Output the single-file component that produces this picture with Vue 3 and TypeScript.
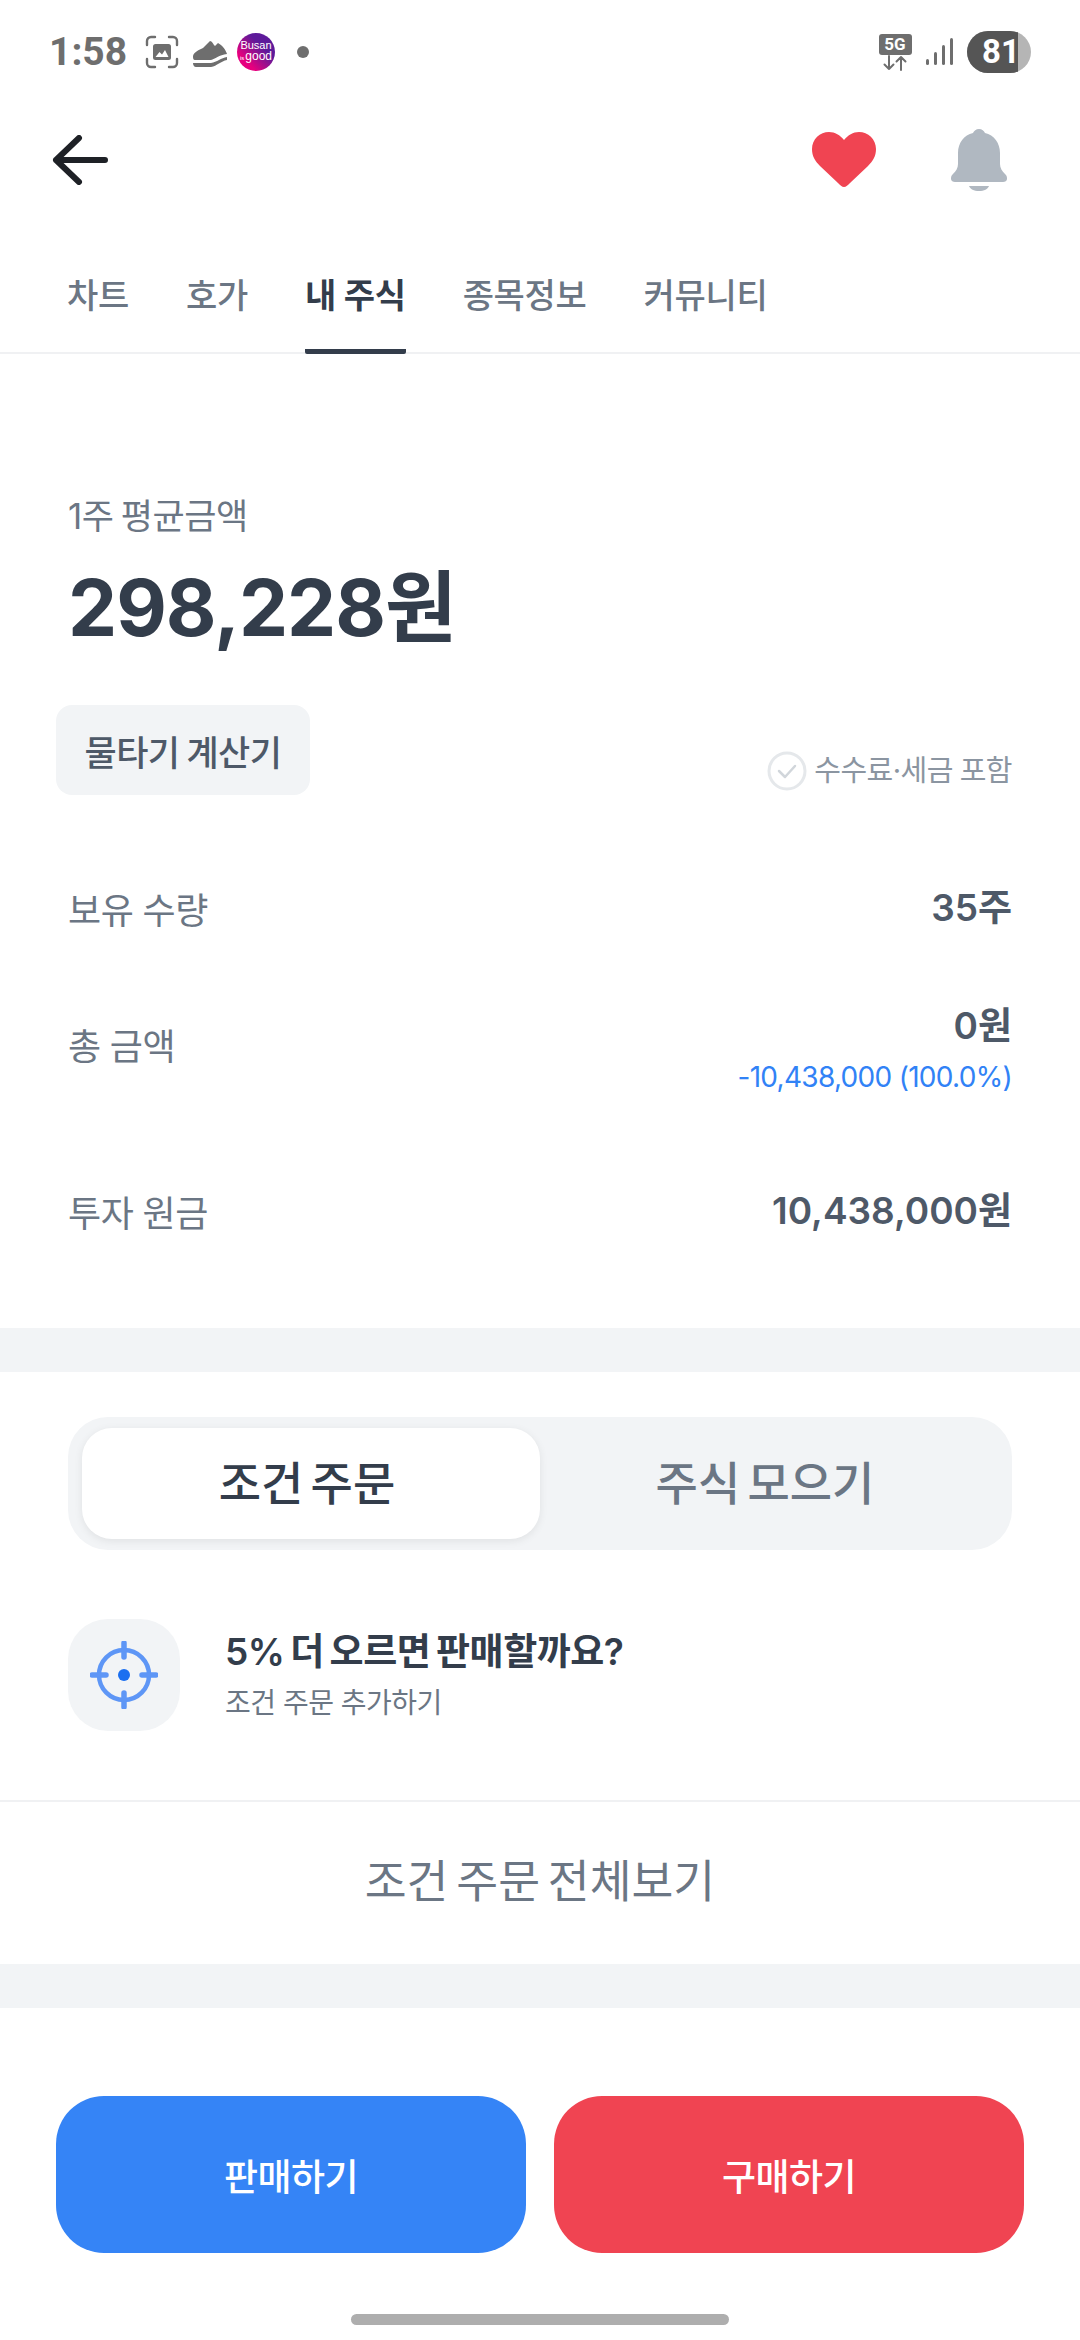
<template>
  <div class="screen">
    <div class="status-bar">
      <span class="time">1:58</span>
      <svg class="st-shot" viewBox="0 0 34 34" width="34" height="34">
        <path d="M2 10V6a4 4 0 0 1 4-4h4M24 2h4a4 4 0 0 1 4 4v4M32 24v4a4 4 0 0 1-4 4h-4M10 32H6a4 4 0 0 1-4-4v-4" fill="none" stroke="#6e6e6e" stroke-width="2.400" stroke-linecap="round" />
        <rect x="8" y="9" width="18" height="16" rx="2.500" fill="#6e6e6e" />
        <path d="M10.500 22l4-5 2.500 2.500 3-4.500 3.500 7z" fill="#fff" />
      </svg>
      <svg class="st-shoe" viewBox="0 0 36 32" width="36" height="32">
        <path d="M1 20c1-4 6-6 10-8l7-7c2 0 3 3 5 5l3-3c4 2 8 7 9 11-8 1-12 5-16 6H3c-2 0-2-2-2-4z" fill="#6e6e6e" />
        <path d="M1 27h18c6-1 10-5 16-6v3c-6 1-10 6-16 7H4c-2 0-3-2-3-4z" fill="#6e6e6e" />
      </svg>
      <div class="st-logo">
        <span class="logo-l1">Busan</span>
        <span class="logo-l2"><i>is</i>good</span>
      </div>
      <span class="st-dot"></span>
      <div class="st-right">
        <div class="st-5g">
          <span class="g-box">5G</span>
          <svg viewBox="0 0 26 16" width="26" height="16">
            <path d="M7 1v13M2.500 9.500L7 14l4.500-4.500M19 15V2M14.500 6.500L19 2l4.500 4.500" fill="none" stroke="#6e6e6e" stroke-width="2" stroke-linecap="round" stroke-linejoin="round" />
          </svg>
        </div>
        <svg class="st-signal" viewBox="0 0 28 30" width="28" height="30">
          <rect x="1" y="22" width="3" height="6" rx="1.500" fill="#6e6e6e" />
          <rect x="9" y="15" width="3" height="13" rx="1.500" fill="#6e6e6e" />
          <rect x="17" y="8" width="3" height="20" rx="1.500" fill="#6e6e6e" />
          <rect x="25" y="1" width="3" height="27" rx="1.500" fill="#6e6e6e" />
        </svg>
        <div class="st-batt"><span class="batt-fill"></span><span class="batt-num">81</span></div>
      </div>
    </div>

    <header class="top-bar">
      <svg class="back" viewBox="0 0 56 50" width="56" height="50">
        <path d="M27 3L4 25l23 22M4 25h49" fill="none" stroke="#1e2126" stroke-width="6" stroke-linecap="round" stroke-linejoin="round" />
      </svg>
      <div class="top-actions">
        <svg viewBox="0 0 64 56" width="64" height="56">
          <path d="M32 55C30 55 28 53 26 51L8 34C3 29 0 24 0 17 0 7 8 0 17 0c6 0 11 3 15 8 4-5 9-8 15-8 9 0 17 7 17 17 0 7-3 12-8 17L38 51c-2 2-4 4-6 4z" fill="#f04452" />
        </svg>
        <svg viewBox="0 0 56 62" width="56" height="62">
          <path d="M28 0c3 0 5 2 6 4 9 2 15 10 15 20v11c0 4 2 7 5 10 2 2 2 3 2 5 0 2-2 3-4 3H4c-2 0-4-1-4-3 0-2 0-3 2-5 3-3 5-6 5-10V24C7 14 13 6 22 4c1-2 3-4 6-4z" fill="#b0b8c1" />
          <path d="M18 57h20c-1 3-5 5-10 5s-9-2-10-5z" fill="#b0b8c1" />
        </svg>
      </div>
    </header>

    <nav class="tabs">
      <div v-for="t in tabs" :key="t" class="tab" :class="{ active: t === '내 주식' }">{{ t }}</div>
    </nav>

    <section class="summary">
      <div class="avg-label">1주 평균금액</div>
      <div class="avg-value">298,228원</div>
      <div class="calc-row">
        <button class="calc-btn">물타기 계산기</button>
        <div class="fee-note">
          <svg viewBox="0 0 40 40" width="40" height="40">
            <circle cx="20" cy="20" r="18" fill="none" stroke="#e5e8eb" stroke-width="3" />
            <path d="M12 20l6 6 10-11" fill="none" stroke="#d1d6db" stroke-width="2.500" stroke-linecap="round" stroke-linejoin="round" />
          </svg>
          <span>수수료·세금 포함</span>
        </div>
      </div>
      <div class="info-row row-qty">
        <span class="info-label">보유 수량</span>
        <span class="info-value">35주</span>
      </div>
      <div class="info-row row-total">
        <span class="info-label">총 금액</span>
        <div class="info-right">
          <span class="info-value">0원</span>
          <span class="info-sub">-10,438,000 (100.0%)</span>
        </div>
      </div>
      <div class="info-row row-principal">
        <span class="info-label">투자 원금</span>
        <span class="info-value">10,438,000원</span>
      </div>
    </section>

    <div class="band"></div>

    <section class="orders">
      <div class="segment">
        <div class="seg-item on">조건 주문</div>
        <div class="seg-item">주식 모으기</div>
      </div>
      <div class="order-item">
        <div class="order-icon">
          <svg viewBox="0 0 68 68" width="68" height="68">
            <circle cx="34" cy="34" r="25" fill="none" stroke="#5e96f6" stroke-width="4.500" />
            <path d="M34 2v14M34 52v14M2 34h14M52 34h14" stroke="#5e96f6" stroke-width="5.500" stroke-linecap="round" />
            <circle cx="34" cy="34" r="6" fill="#1b6ff0" />
          </svg>
        </div>
        <div class="order-text">
          <div class="order-title">5% 더 오르면 판매할까요?</div>
          <div class="order-sub">조건 주문 추가하기</div>
        </div>
      </div>
      <div class="view-all">조건 주문 전체보기</div>
    </section>

    <div class="band"></div>

    <div class="actions">
      <button class="act sell">판매하기</button>
      <button class="act buy">구매하기</button>
    </div>
    <div class="home-pill"></div>
  </div>
</template>

<script setup lang="ts">
const tabs: string[] = ['차트', '호가', '내 주식', '종목정보', '커뮤니티']
</script>

<style>
html,
body {
  margin: 0;
  background: #fff;
}
</style>

<style scoped>
.screen {
  width: 1080px;
  height: 2340px;
  overflow: hidden;
  background: #fff;
  font-family: Inter, "Noto Sans CJK KR", sans-serif;
  color: #333d4b;
}

.status-bar {
  height: 76px;
  padding: 28px 50px 0 49px;
  box-sizing: border-box;
  display: flex;
  align-items: center;
  color: #6e6e6e;
}

.time {
  font-size: 39px;
  font-weight: 700;
  font-family: Roboto, sans-serif;
  width: 96px;
}

.st-shoe {
  margin-left: 13px;
}

.st-logo {
  width: 38px;
  height: 38px;
  margin-left: 9px;
  border-radius: 50%;
  background: linear-gradient(225deg, #5d1a9a 35%, #e6007e 75%);
  color: #fff;
  font-size: 11px;
  line-height: 11px;
  font-family: "Liberation Sans", sans-serif;
  display: flex;
  flex-direction: column;
  align-items: center;
  justify-content: center;
  overflow: hidden;
}

.logo-l1,
.logo-l2 {
  white-space: nowrap;
}

.logo-l2 {
  font-size: 12px;
}

.logo-l2 i {
  font-style: normal;
  font-size: 6px;
  margin-right: 1px;
}

.st-dot {
  width: 12px;
  height: 12px;
  border-radius: 50%;
  background: #6e6e6e;
  margin-left: 22px;
}

.st-right {
  margin-left: auto;
  margin-right: -1px;
  display: flex;
  align-items: center;
}

.st-5g {
  display: flex;
  flex-direction: column;
  align-items: center;
  width: 34px;
}

.g-box {
  width: 33px;
  height: 21px;
  line-height: 21px;
  background: #6e6e6e;
  color: #fff;
  font-size: 17px;
  font-weight: 700;
  border-radius: 3px;
  text-align: center;
  font-family: Roboto, sans-serif;
}

.st-signal {
  margin-left: 13px;
}

.st-batt {
  position: relative;
  margin-left: 14px;
  width: 64px;
  height: 42px;
  border-radius: 21px;
  background: #b5b5b5;
  overflow: hidden;
}

.batt-fill {
  position: absolute;
  left: 0;
  top: 0;
  bottom: 0;
  width: 51px;
  background: #555;
}

.batt-num {
  position: absolute;
  left: 15px;
  top: 0;
  line-height: 42px;
  color: #fff;
  font-size: 33px;
  font-weight: 700;
  font-family: Roboto, sans-serif;
}

.top-bar {
  height: 112px;
  margin-top: 28px;
  padding: 0 73px 0 52px;
  display: flex;
  align-items: center;
  justify-content: space-between;
}

.top-actions {
  display: flex;
  align-items: center;
  gap: 75px;
}

.tabs {
  margin-top: 22px;
  height: 116px;
  box-sizing: border-box;
  padding-left: 67px;
  display: flex;
  gap: 57px;
  border-bottom: 2px solid #f0f1f3;
}

.tab {
  font-size: 34px;
  line-height: 48px;
  padding-top: 34px;
  color: #6b7684;
  font-weight: 500;
  letter-spacing: -0.3px;
  height: 116px;
  box-sizing: border-box;
}

.tab.active {
  color: #333d4b;
  font-weight: 700;
  border-bottom: 5px solid #333d4b;
  border-radius: 0 0 2px 2px;
}

.summary {
  height: 974px;
  box-sizing: border-box;
  padding: 138px 68px 0;
}

.avg-label {
  font-size: 35px;
  line-height: 48px;
  color: #6b7684;
  letter-spacing: -0.5px;
  word-spacing: -2px;
}

.avg-value {
  margin-top: 18px;
  font-size: 78px;
  line-height: 100px;
  font-weight: 700;
  letter-spacing: -1px;
}

.calc-row {
  margin: 47px 0 0 -12px;
  display: flex;
  justify-content: space-between;
  align-items: flex-end;
}

.calc-btn {
  width: 254px;
  height: 90px;
  border: 0;
  border-radius: 16px;
  background: #f2f4f6;
  color: #4e5968;
  font: 500 35px Inter, "Noto Sans CJK KR", sans-serif;
  letter-spacing: -0.5px;
  word-spacing: -2px;
  padding: 0;
}

.fee-note {
  display: flex;
  align-items: center;
  gap: 7px;
  margin-bottom: 4px;
  color: #8b95a1;
  font-size: 29px;
  line-height: 40px;
  letter-spacing: -0.5px;
  word-spacing: -1px;
}

.info-row {
  display: flex;
  justify-content: space-between;
  align-items: center;
}

.row-qty {
  margin-top: 88px;
  height: 50px;
}

.row-total {
  margin-top: 72px;
  height: 86px;
}

.row-principal {
  margin-top: 95px;
  height: 50px;
}

.info-label {
  font-size: 36px;
  color: #6b7684;
  letter-spacing: -0.3px;
  word-spacing: -1px;
}

.row-total .info-label {
  margin-bottom: 8px;
}

.info-right {
  display: flex;
  flex-direction: column;
  align-items: flex-end;
}

.info-value {
  font-size: 37px;
  line-height: 50px;
  font-weight: 600;
  color: #4e5968;
}

.info-sub {
  margin-top: 8px;
  font-size: 28px;
  line-height: 36px;
  color: #3182f6;
  letter-spacing: -0.7px;
}

.band {
  height: 44px;
  background: #f2f4f6;
}

.orders {
  height: 592px;
  box-sizing: border-box;
  padding-top: 45px;
}

.segment {
  margin: 0 68px;
  height: 133px;
  box-sizing: border-box;
  padding: 11px 14px;
  border-radius: 40px;
  background: #f2f4f6;
  display: flex;
}

.seg-item {
  flex: 1;
  box-sizing: border-box;
  padding-right: 8px;
  text-align: center;
  font-size: 46px;
  line-height: 110px;
  font-weight: 500;
  color: #6b7684;
  word-spacing: -5px;
}

.seg-item.on {
  background: #fff;
  color: #333d4b;
  border-radius: 30px;
  box-shadow: 0 2px 8px rgba(0, 0, 0, 0.08);
}

.order-item {
  margin: 69px 68px 0;
  display: flex;
  align-items: center;
  gap: 45px;
}

.order-icon {
  width: 112px;
  height: 112px;
  border-radius: 40px;
  background: #f2f4f6;
  display: flex;
  align-items: center;
  justify-content: center;
}

.order-title {
  font-size: 37px;
  line-height: 50px;
  font-weight: 600;
  letter-spacing: -0.5px;
  word-spacing: -3px;
}

.order-sub {
  margin-top: 6px;
  font-size: 28px;
  line-height: 40px;
  color: #6b7684;
  letter-spacing: -0.5px;
}

.view-all {
  margin-top: 69px;
  border-top: 2px solid #f0f1f3;
  text-align: center;
  font-size: 45.500px;
  height: 162px;
  line-height: 160px;
  color: #6b7684;
  word-spacing: -5px;
}

.actions {
  margin-top: 88px;
  padding: 0 56px;
  display: flex;
  gap: 28px;
}

.act {
  flex: 1;
  height: 157px;
  border: 0;
  border-radius: 48px;
  color: #fff;
  font: 500 37px Inter, "Noto Sans CJK KR", sans-serif;
  letter-spacing: -0.5px;
}

.sell {
  background: #3584f6;
}

.buy {
  background: #f04452;
}

.home-pill {
  margin: 61px auto 0;
  width: 378px;
  height: 11px;
  border-radius: 5.500px;
  background: #aeaeae;
}
</style>
